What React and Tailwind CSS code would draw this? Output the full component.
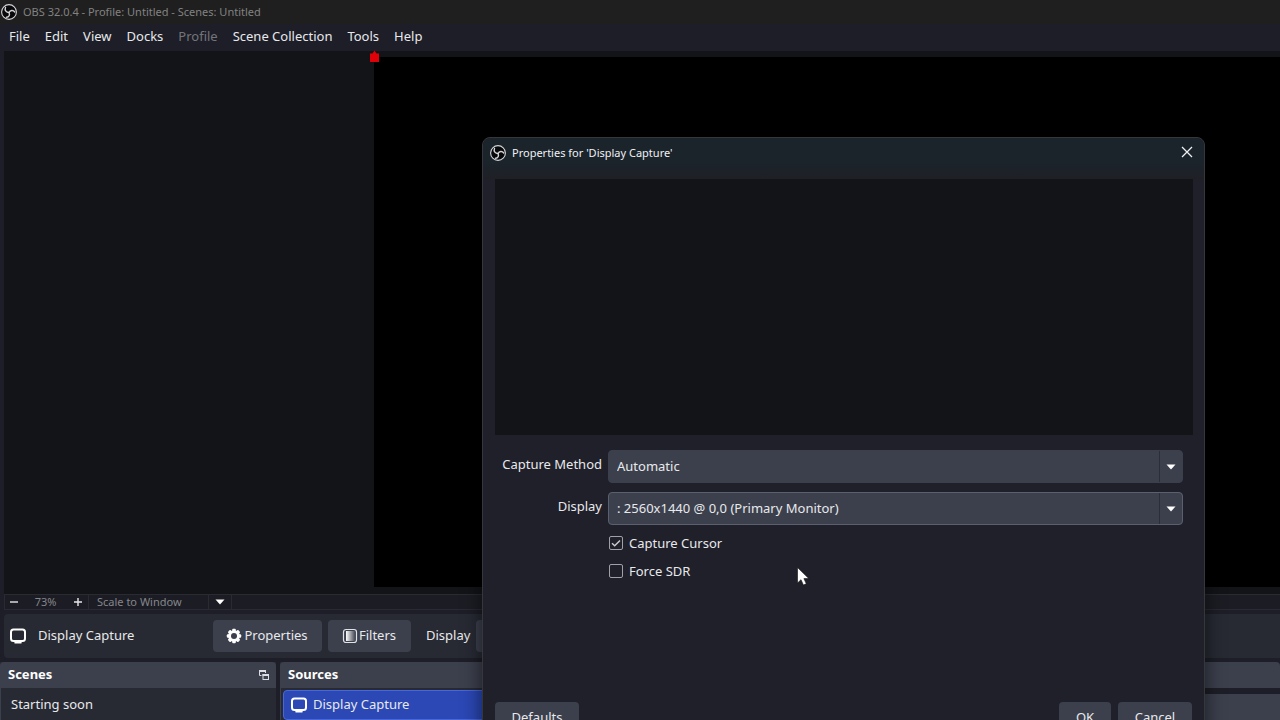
import React from "react";

const fontStack = "font-['Noto_Sans','Open_Sans',sans-serif]";

function ObsLogo() {
  return (
    <svg viewBox="0 0 32 32" className="size-4 shrink-0" aria-hidden="true">
      <circle cx="16" cy="16" r="14.800" fill="#08080a" stroke="#d4d5d8" strokeWidth="2.200" />
      <g fill="none" stroke="#d4d5d8" strokeWidth="2.800" strokeLinecap="round">
        <path d="M16 17C11 17 6.500 13 9 7" />
        <path d="M16 17C18.500 12.500 24 11 27.500 16" />
        <path d="M16 17C18.500 21.500 16 26.500 11 26.500" />
      </g>
    </svg>
  );
}

function MonitorIcon() {
  return (
    <svg viewBox="0 0 16 16" className="size-4 shrink-0" fill="none" aria-hidden="true">
      <rect x="1" y="1.500" width="14" height="11.500" rx="2.500" stroke="#fff" strokeWidth="2" />
      <path d="M5 14.700h6" stroke="#fff" strokeWidth="1.600" strokeLinecap="round" />
    </svg>
  );
}

function GearIcon() {
  return (
    <svg viewBox="0 0 16 16" className="size-4 shrink-0" aria-hidden="true">
      <g fill="#fefefe">
        <rect x="6.200" y="0.800" width="3.600" height="14.400" rx="1" />
        <rect x="6.200" y="0.800" width="3.600" height="14.400" rx="1" transform="rotate(45 8 8)" />
        <rect x="6.200" y="0.800" width="3.600" height="14.400" rx="1" transform="rotate(90 8 8)" />
        <rect x="6.200" y="0.800" width="3.600" height="14.400" rx="1" transform="rotate(135 8 8)" />
        <circle cx="8" cy="8" r="5.800" />
      </g>
      <circle cx="8" cy="8" r="3" fill="#3c404d" />
    </svg>
  );
}

function FilterIcon() {
  return (
    <svg viewBox="0 0 16 16" className="size-4 shrink-0" aria-hidden="true">
      <defs>
        <linearGradient id="fade">
          <stop offset="0" stopColor="#fff" />
          <stop offset="1" stopColor="#fff" stopOpacity="0.050" />
        </linearGradient>
      </defs>
      <rect x="1.500" y="1.500" width="13" height="13" rx="2.500" fill="none" stroke="#e2e3e7" strokeWidth="1.200" />
      <rect x="4" y="3" width="9" height="10" fill="url(#fade)" />
    </svg>
  );
}

function FloatIcon() {
  return (
    <svg viewBox="0 0 12 12" className="size-3" fill="none" stroke="#dcdde2" aria-hidden="true">
      <path d="M3.500 6.500h-2v-5h6v2.500" />
      <path d="M1 2h7M4.500 6h6.500" strokeWidth="2" />
      <rect x="5" y="5.500" width="5.500" height="5" />
    </svg>
  );
}

function Triangle() {
  return (
    <svg viewBox="0 0 10 6" className="h-[6px] w-[10px]" aria-hidden="true">
      <path d="M0.500 0.500h9L5 5.500z" fill="#fff" />
    </svg>
  );
}

const menus = ["File", "Edit", "View", "Docks", "Profile", "Scene Collection", "Tools", "Help"];

function Combo({ id, label, value, outlined }) {
  return (
    <div className="flex items-start gap-[6px]">
      <label htmlFor={id} className="w-[107px] shrink-0 pt-1 text-right leading-5">
        {label}
      </label>
      <div
        className={
          outlined
            ? "grid h-[33px] flex-1 rounded border border-[#5b6070] bg-[#3c404d]"
            : "grid h-[33px] flex-1 rounded border border-[#3c404d] bg-[#3c404d]"
        }
      >
        <select id={id} className="col-start-1 row-start-1 w-full appearance-none bg-transparent px-2 outline-none">
          <option>{value}</option>
        </select>
        <span className="pointer-events-none col-start-1 row-start-1 flex w-[23px] items-center justify-center justify-self-end border-l border-[#2b2d38]">
          <Triangle />
        </span>
      </div>
    </div>
  );
}

function Check({ id, label, checked }) {
  return (
    <div className="flex items-center gap-[6px] pl-[114px]">
      <span className="grid size-[14px] place-items-center">
        <input
          id={id}
          type="checkbox"
          defaultChecked={checked}
          className="peer col-start-1 row-start-1 size-[14px] appearance-none rounded-xs border border-[#a0a1a7]"
        />
        <svg
          viewBox="0 0 12 12"
          className="pointer-events-none invisible col-start-1 row-start-1 size-3 peer-checked:visible"
          aria-hidden="true"
        >
          <path d="M2 6.200l2.700 2.600L10 3.500" fill="none" stroke="#c9cace" strokeWidth="1.500" />
        </svg>
      </span>
      <label htmlFor={id} className="leading-5">
        {label}
      </label>
    </div>
  );
}

function PropertiesDialog() {
  return (
    <section
      role="dialog"
      aria-labelledby="dialog-title"
      className="absolute top-[137px] left-[482px] flex w-[723px] flex-col rounded-t-lg border border-[#35373c] bg-[#1f2029] shadow-[0_4px_20px_rgba(0,0,0,0.6)]"
    >
      <header className="flex h-[41px] items-start justify-between rounded-t-lg bg-linear-to-b from-[#1b232b] from-60% to-[#1f2026] pt-[6px] pr-[9px] pl-[7px]">
        <div className="flex items-center gap-[6px]">
          <ObsLogo />
          <h2 id="dialog-title" className="text-[11px] leading-[18px] text-[#f0f1f3]">
            Properties for 'Display Capture'
          </h2>
        </div>
        <button type="button" aria-label="Close" className="grid size-4 place-items-center">
          <svg viewBox="0 0 12 12" className="size-3" aria-hidden="true">
            <path d="M1 1l10 10M11 1L1 11" stroke="#eef0f2" strokeWidth="1.300" />
          </svg>
        </button>
      </header>
      <div className="mr-[11px] ml-3 h-[256px] bg-[#131418]" />
      <div className="flex flex-col gap-[9px] pt-[15px] pr-[21px] pl-3">
        <Combo id="method" label="Capture Method" value="Automatic" />
        <Combo id="display" label="Display" value=": 2560x1440 @ 0,0 (Primary Monitor)" outlined />
        <div className="-mt-px flex flex-col gap-2">
          <Check id="cursor" label="Capture Cursor" checked />
          <Check id="sdr" label="Force SDR" />
        </div>
      </div>
      <footer className="mt-[121px] flex gap-[7px] px-3 pb-3">
        <button type="button" className="mr-auto h-8 w-[84px] rounded bg-[#3c404d]">
          Defaults
        </button>
        <button type="button" className="h-8 w-[52px] rounded bg-[#3c404d]">
          OK
        </button>
        <button type="button" className="h-8 w-[74px] rounded bg-[#3c404d]">
          Cancel
        </button>
      </footer>
    </section>
  );
}

function StatusBar() {
  return (
    <div className="flex h-4 shrink-0 items-stretch border-y border-[#292a32] bg-[#1c1d24] text-[11px] leading-[14px] text-[#85868c]">
      <button type="button" aria-label="Zoom out" className="grid w-[19px] place-items-center border-l border-[#292a32]">
        <svg viewBox="0 0 8 8" className="size-2" aria-hidden="true">
          <path d="M0 4h8" stroke="#e6e6ea" strokeWidth="1.400" />
        </svg>
      </button>
      <span className="w-[45px] text-center">73%</span>
      <button type="button" aria-label="Zoom in" className="grid w-5 place-items-center">
        <svg viewBox="0 0 8 8" className="size-2" aria-hidden="true">
          <path d="M0 4h8M4 0v8" stroke="#e6e6ea" strokeWidth="1.400" />
        </svg>
      </button>
      <div className="grid w-[144px] border-x border-[#292a32]">
        <select aria-label="Preview scaling" className="col-start-1 row-start-1 appearance-none bg-transparent px-2 outline-none">
          <option>Scale to Window</option>
        </select>
        <span className="pointer-events-none col-start-1 row-start-1 flex w-[23px] items-center justify-center justify-self-end border-l border-[#292a32]">
          <Triangle />
        </span>
      </div>
    </div>
  );
}

export default function App() {
  return (
    <div
      className={`relative flex h-screen flex-col overflow-hidden bg-[#1d1e27] text-[13px] text-[#e8e9ec] ${fontStack}`}
    >
      <header className="flex h-6 shrink-0 items-center gap-[6px] bg-[#1f1f1f] px-[1px]">
        <ObsLogo />
        <h1 className="text-[11px] text-[#828282]">OBS 32.0.4 - Profile: Untitled - Scenes: Untitled</h1>
      </header>
      <nav className="flex h-[27px] shrink-0 items-center gap-[15px] px-[9px] pb-[2px]">
        {menus.map((name) => (
          <button key={name} type="button" disabled={name === "Profile"} className="disabled:text-[#74757b]">
            {name}
          </button>
        ))}
      </nav>

      <main className="ml-1 flex min-h-0 flex-1 bg-[#131418] pt-[6px] pb-[7px] pl-[370px]">
        <div className="relative flex-1 bg-black">
          <svg viewBox="0 0 10 12" className="absolute -top-[7px] -left-[4px] h-3 w-[10px]" aria-hidden="true">
            <path d="M0 3.500h2.500L4.500 0.500l2 3H9V12H0z" fill="#e00008" />
          </svg>
        </div>
      </main>

      <div className="ml-1 flex shrink-0 flex-col gap-1">
        <StatusBar />
        <div className="flex h-[44px] items-center rounded-l bg-[#272a33] pl-[6px]">
          <MonitorIcon />
          <span className="w-[187px] pl-3">Display Capture</span>
          <div className="flex items-center gap-[6px]">
            <button type="button" className="flex h-8 w-[109px] items-center justify-center rounded bg-[#3c404d]">
              <GearIcon />
              <span className="pr-px pl-[2px]">Properties</span>
            </button>
            <button type="button" className="flex h-8 w-[83px] items-center justify-center rounded bg-[#3c404d]">
              <FilterIcon />
              <span className="pr-px pl-[1px]">Filters</span>
            </button>
          </div>
          <label htmlFor="source-display" className="pr-[6px] pl-[15px]">
            Display
          </label>
          <select id="source-display" className="h-8 w-[400px] appearance-none rounded bg-[#3c404d]" />
        </div>
      </div>

      <div className="mt-1 flex h-[58px] shrink-0 gap-1">
        <section className="flex w-[276px] flex-col bg-[#272a33]">
          <header className="flex h-[26px] shrink-0 items-center justify-between rounded-t bg-[#3c404d] pr-[6px] pl-2">
            <h2 className="font-bold text-white">Scenes</h2>
            <button type="button" aria-label="Float Scenes dock">
              <FloatIcon />
            </button>
          </header>
          <ul className="border-l border-[#3c404d] px-[10px] py-[5px]">
            <li className="leading-[22px]">Starting soon</li>
          </ul>
        </section>
        <section className="flex w-[600px] flex-col bg-[#272a33]">
          <header className="flex h-[26px] shrink-0 items-center rounded-t bg-[#3c404d] px-2">
            <h2 className="font-bold text-white">Sources</h2>
          </header>
          <ul className="border-l border-[#3c404d] p-[2px]">
            <li className="flex h-[30px] items-center gap-[6px] rounded border border-[#4767dc] bg-[#2b48b5] pl-[7px]">
              <MonitorIcon />
              Display Capture
            </li>
          </ul>
        </section>
        <section className="flex min-w-0 flex-1 flex-col gap-[6px]">
          <div className="h-[26px] shrink-0 rounded-t bg-[#3c404d]" />
          <div className="flex-1 bg-[#3c404d]" />
        </section>
      </div>

      <PropertiesDialog />
      <svg viewBox="0 0 12 19" className="absolute top-[567px] left-[797px] h-[19px] w-3" aria-hidden="true">
        <path d="M0.500 0.500v15.500l3.500-3.300 2.400 5.300 2.900-1.200-2.400-5.200h4.900z" fill="#fff" stroke="#111" strokeWidth="0.600" />
      </svg>
    </div>
  );
}
